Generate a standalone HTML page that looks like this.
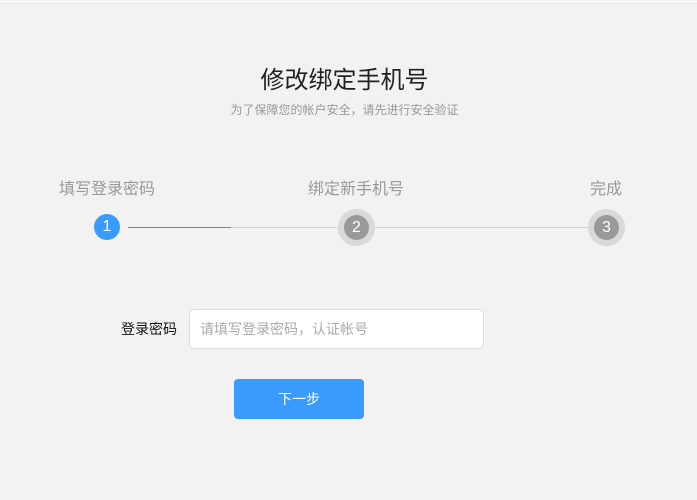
<!DOCTYPE html>
<html><head><meta charset="utf-8"><style>
*{margin:0;padding:0;box-sizing:border-box}
body{width:697px;height:500px;background:#f2f2f2;font-family:"Liberation Sans","Noto Sans CJK SC",sans-serif;position:relative;overflow:hidden}
.top{position:absolute;left:0;top:0;width:697px;height:4px;background:#f7f8fa;border-bottom:1px solid #e8e8e8}
.a{position:absolute;white-space:nowrap}
.t{left:0;width:697px;text-align:center;top:66px;font-size:24px;color:#222;line-height:30px;transform:translateX(-4px)}
.s{left:0;width:697px;text-align:center;top:102px;font-size:12px;color:#999;line-height:16px;transform:translateX(-4px)}
.l{font-size:16px;color:#999;top:180px;line-height:20px}
.c{position:absolute;border-radius:50%;color:#fff;text-align:center;font-size:16px}
.line{position:absolute;height:1px;top:227px;background:#d4d4d4}
</style></head><body>
<div class="top"></div>
<div class="a t">修改绑定手机号</div>
<div class="a s">为了保障您的帐户安全，请先进行安全验证</div>
<div class="a l" style="left:59px">填写登录密码</div>
<div class="a l" style="left:308px">绑定新手机号</div>
<div class="a l" style="left:590px">完成</div>
<div class="line" style="left:128px;width:212px"></div>
<div class="line" style="left:128px;width:103px;background:#3a8fe0"></div>
<div class="line" style="left:374px;width:215px"></div>
<div class="c" style="left:94px;top:214px;width:26px;height:26px;line-height:26px;background:#3a9bff">1</div>
<div class="c" style="left:338px;top:209px;width:37px;height:37px;background:#d9d9d9"></div>
<div class="c" style="left:344px;top:215px;width:25px;height:25px;line-height:25px;background:#999">2</div>
<div class="c" style="left:588px;top:209px;width:37px;height:37px;background:#d9d9d9"></div>
<div class="c" style="left:594px;top:215px;width:25px;height:25px;line-height:25px;background:#999">3</div>
<div class="a" style="left:121px;top:320px;font-size:14px;color:#111;line-height:18px">登录密码</div>
<div class="a" style="left:189px;top:309px;width:295px;height:40px;background:#fff;border:1px solid #ddd;border-radius:5px;font-size:14px;color:#aaa;line-height:38px;padding-left:10px">请填写登录密码，认证帐号</div>
<div class="a" style="left:234px;top:379px;width:130px;height:40px;background:#3a9bff;border-radius:4px;color:#fff;font-size:14px;line-height:40px;text-align:center">下一步</div>
</body></html>
